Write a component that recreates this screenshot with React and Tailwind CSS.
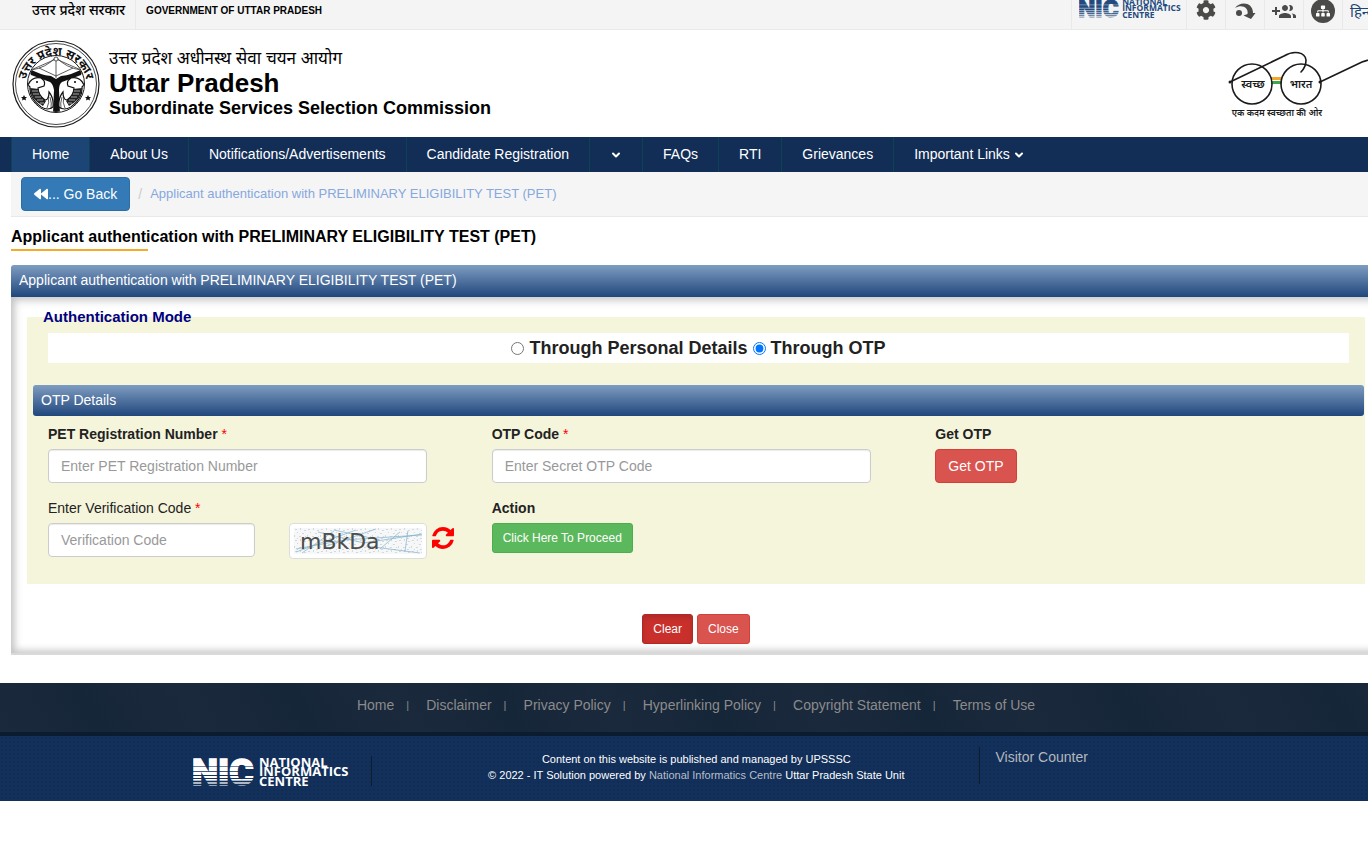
import React, { useState } from 'react';
import { FaBackward, FaCog, FaSitemap } from 'react-icons/fa';
import { ChevronDown } from 'lucide-react';

const NAV_ITEMS = [
  { label: 'Home', active: true },
  { label: 'About Us' },
  { label: 'Notifications/Advertisements' },
  { label: 'Candidate Registration' },
  { label: '', menu: true },
  { label: 'FAQs' },
  { label: 'RTI' },
  { label: 'Grievances' },
  { label: 'Important Links', menu: true },
];

const FOOTER_LINKS = [
  'Home',
  'Disclaimer',
  'Privacy Policy',
  'Hyperlinking Policy',
  'Copyright Statement',
  'Terms of Use',
];

const PAGE_TITLE = 'Applicant authentication with PRELIMINARY ELIGIBILITY TEST (PET)';

function NicLogo({ className, stripe }) {
  return (
    <svg viewBox="0 0 156 32" className={className} role="img" aria-label="National Informatics Centre">
      <text
        x="-1"
        y="29"
        fill="currentColor"
        stroke="currentColor"
        strokeWidth="1.5"
        fontFamily="Roboto, sans-serif"
        fontWeight="900"
        fontSize="37"
      >
        NIC
      </text>
      <g fill={stripe}>
        <rect x="0" y="10" width="64" height="1" opacity="0.6" />
        <rect x="0" y="15" width="64" height="1" opacity="0.8" />
        <rect x="0" y="19" width="64" height="1" />
        <rect x="0" y="22" width="64" height="1" />
        <rect x="0" y="25" width="64" height="1" />
        <rect x="0" y="28" width="64" height="1" />
        <rect x="0" y="24" width="64" height="7" opacity="0.35" />
      </g>
      <text fill="currentColor" fontFamily="'Open Sans', sans-serif" fontWeight="700" fontSize="13">
        <tspan x="66" y="11">NATIONAL</tspan>
        <tspan x="66" y="20">INFORMATICS</tspan>
        <tspan x="66" y="30">CENTRE</tspan>
      </text>
    </svg>
  );
}

function Fish() {
  return (
    <>
      <path d="M16 45 Q20 36 29 38 Q34 41 32 46 L26 48 Q26 55 33 60 Q37 60 37 52 Q42 58 41 67 Q36 71 29 67 Q17 58 18 47 Z" fill="#fff" stroke="#111" strokeWidth="1.2" />
      <path d="M18 48 L27 49 Q26 55 34 61 L31 66 Q18 59 18 48 Z" fill="#222" />
      <path d="M20 51h6M21 54h6M23 57h6M25 60h6M28 63h4" stroke="#fff" strokeWidth="0.6" />
      <path d="M35 68 Q38 62 36 57 M39 69 Q40 63 38 57" fill="none" stroke="#111" strokeWidth="0.7" />
      <circle cx="25" cy="42" r="1.1" fill="#111" />
    </>
  );
}

function StateEmblem() {
  return (
    <svg viewBox="0 0 88 88" className="h-[88px] w-[88px] shrink-0" role="img" aria-label="Uttar Pradesh emblem">
      <defs>
        <path id="emblem-arc" d="M13.5 52 A31 31 0 1 1 74.5 52" />
        <clipPath id="emblem-clip">
          <circle cx="44" cy="44" r="28" />
        </clipPath>
      </defs>
      <g fill="none" stroke="#1a1a1a">
        <circle cx="44" cy="44" r="43" strokeWidth="1.2" />
        <circle cx="44" cy="44" r="40.5" strokeWidth="0.8" />
        <circle cx="44" cy="44" r="28.5" strokeWidth="1" />
      </g>
      <text fontFamily="'Noto Sans', 'Noto Sans Devanagari', sans-serif" fontSize="12" fontWeight="700" fill="#111">
        <textPath href="#emblem-arc" startOffset="50%" textAnchor="middle">
          उत्तर प्रदेश सरकार
        </textPath>
      </text>
      <path d="M12 55l1 2h2l-1.5 1.500.5 2-2-1-2 1 .5-2L9 57h2zM76 55l1 2h2l-1.5 1.500.5 2-2-1-2 1 .5-2-1.5-1.5h2z" fill="#111" />
      <g clipPath="url(#emblem-clip)">
        {/* bow and arrow */}
        <path d="M19 30 Q34 28 44 17 Q54 28 69 30 M19 30 L44 19 L69 30 M44 17 V38 M27 28 L44 36 L61 28" fill="none" stroke="#333" strokeWidth="0.8" />
        <circle cx="44" cy="19" r="2" fill="#fff" stroke="#333" strokeWidth="0.8" />
        {/* confluence of the rivers */}
        <path d="M16 28 Q28 35 39 36 L44 39 L49 36 Q60 35 72 28 L69 35 Q58 39 50 42 Q47 44 47 50 L48 74 H41 L42 50 Q41 44 38 42 Q30 39 19 35 Z" fill="#111" />
        <Fish />
        <g transform="translate(88 0) scale(-1 1)">
          <Fish />
        </g>
      </g>
    </svg>
  );
}

function SwachhBharatLogo() {
  return (
    <svg viewBox="0 0 152 70" className="h-[70px] w-[152px] shrink-0" role="img" aria-label="Swachh Bharat">
      <rect x="43" y="27" width="11" height="3" fill="#f7a429" />
      <rect x="43" y="31" width="11" height="3" fill="#3fa64b" />
      <g fill="none" stroke="#1a1a1a" strokeWidth="1.6" strokeLinecap="round">
        <circle cx="24" cy="34" r="20" />
        <circle cx="73" cy="34" r="20" />
        <path d="M2 32 L56 6 C66 0 77 2 78 10 C78 15 76 19 73 22" />
        <path d="M92 32 L134 12 C139 10 144 9 150 8" />
      </g>
      <circle cx="2" cy="32" r="1.5" fill="#1a1a1a" />
      <circle cx="92" cy="32" r="1.5" fill="#1a1a1a" />
      <g fill="#1a1a1a" fontFamily="'Noto Sans', 'Noto Sans Devanagari', sans-serif" fontWeight="600" textAnchor="middle">
        <text x="25" y="38" fontSize="11">स्वच्छ</text>
        <text x="73" y="38" fontSize="11">भारत</text>
        <text x="49" y="66" fontSize="9">एक कदम स्वच्छता की ओर</text>
      </g>
    </svg>
  );
}

function SkipIcon() {
  return (
    <svg viewBox="0 0 24 24" className="h-6 w-6" fill="#4a4a48">
      <circle cx="6" cy="13" r="3" />
      <path d="M2 8 C7 1 20 2 20 13 H22.5 L18 19 L10.5 15.500 L14.5 14 C16 8 9 3.5 2 8 Z" />
    </svg>
  );
}

function GroupAddIcon() {
  return (
    <svg viewBox="0 0 24 24" className="h-6 w-6" fill="#4a4a48">
      <path d="M8 10H5V7H3v3H0v2h3v3h2v-3h3v-2zm10 1c1.66 0 2.99-1.34 2.99-3S19.66 5 18 5c-.32 0-.63.05-.91.14.57.81.9 1.79.9 2.86s-.34 2.04-.9 2.86c.28.09.59.14.91.14zm-5 0c1.66 0 2.99-1.34 2.99-3S14.66 5 13 5c-1.66 0-3 1.34-3 3s1.34 3 3 3zm6.62 2.16c.83.73 1.38 1.66 1.38 2.84v2h3v-2c0-1.54-2.37-2.49-4.38-2.84zM13 13c-2 0-6 1-6 3v2h12v-2c0-2-4-3-6-3z" />
    </svg>
  );
}

function Captcha() {
  return (
    <svg viewBox="0 0 128 26" className="block h-[26px] w-full" role="img" aria-label="Captcha">
      <defs>
        <pattern id="captcha-noise" width="13" height="11" patternUnits="userSpaceOnUse">
          <rect width="13" height="11" fill="#f5f7f8" />
          <path d="M1 1h2v1h-2zM6 0h1v2h-1zM10 2h2v1h-2zM3 4h1v1h-1zM8 5h2v1h-2zM0 7h1v2h-1zM5 8h2v1h-2zM11 8h1v1h-1zM3 10h1v1h-1zM9 10h2v1h-2z" fill="#d3d7da" />
        </pattern>
      </defs>
      <rect width="128" height="26" fill="url(#captcha-noise)" />
      <path
        d="M2 24 L62 2 M30 19 L82 1 M24 4 L70 15 L128 6 M40 2 L86 12 M2 21 L50 12 L128 7 M72 18 L126 25 M86 21 L106 4 M114 3 L111 24 M8 25 L40 3"
        fill="none"
        stroke="#7fb0ca"
        strokeWidth="1"
        opacity="0.7"
      />
      <text x="6" y="21" fontFamily="'DejaVu Sans', sans-serif" fontSize="22" fill="#4d4d4a">
        mBkDa
      </text>
    </svg>
  );
}

function RefreshIcon() {
  return (
    <svg viewBox="128 128 1536 1536" className="h-[22px] w-[22px]" fill="#f00">
      <path d="M1639 1056q0 5-1 7-64 268-268 434.5t-478 166.5q-146 0-282.5-55t-243.5-157l-129 129q-19 19-45 19t-45-19-19-45v-448q0-26 19-45t45-19h448q26 0 45 19t19 45-19 45l-137 137q71 66 161 102t187 36q134 0 250-65t186-179q11-17 53-117 8-23 30-23h192q13 0 22.5 9.5t9.5 22.5zm25-800v448q0 26-19 45t-45 19h-448q-26 0-45-19t-19-45 19-45l138-138q-148-137-349-137-134 0-250 65t-186 179q-11 17-53 117-8 23-30 23h-199q-13 0-22.5-9.5t-9.5-22.5v-7q65-268 270-434.5t480-166.5q146 0 284 55.5t245 156.5l130-129q19-19 45-19t45 19 19 45z" />
    </svg>
  );
}

const TOOL_CLASS = 'flex w-[39px] justify-center border-l border-[#e9e9e9]';

function TopBar() {
  return (
    <div className="flex h-[30px] justify-between overflow-hidden border-b border-[#e9e9e9] bg-[#f4f4f4]">
      <div className="flex items-start">
        <span className="flex h-full items-start border-r border-[#e9e9e9] pl-8 pr-[10px] text-[14px] leading-5 font-medium">
          उत्तर प्रदेश सरकार
        </span>
        <span className="pl-[10px] text-[10px] leading-[22px] font-bold">GOVERNMENT OF UTTAR PRADESH</span>
      </div>
      <div className="-mr-3 flex text-[#4a4a48]">
        <a href="#nic" className="flex w-[115px] items-start border-l border-[#e9e9e9] pl-[7px]">
          <NicLogo className="-mt-[2px] h-[21px] w-[102px] text-[#234a7d]" stripe="#f4f4f4" />
        </a>
        <button type="button" aria-label="Settings" className={TOOL_CLASS}>
          <FaCog className="h-5 w-5" />
        </button>
        <button type="button" aria-label="Skip to content" className={TOOL_CLASS}>
          <SkipIcon />
        </button>
        <button type="button" aria-label="Register" className={TOOL_CLASS}>
          <GroupAddIcon />
        </button>
        <button type="button" aria-label="Sitemap" className={TOOL_CLASS}>
          <span className="-mt-px flex h-6 w-6 items-center justify-center rounded-full bg-[#4a4a48]">
            <FaSitemap className="h-[14px] w-[14px] text-white" />
          </span>
        </button>
        <a href="#hindi" className="w-[38px] overflow-hidden border-l border-[#e9e9e9] pl-[7px] text-[15px] leading-6 whitespace-nowrap text-[#1c4475]">
          हिन्दी
        </a>
      </div>
    </div>
  );
}

function Header() {
  return (
    <header className="flex h-[107px] justify-between pl-3">
      <div className="flex pt-[10px]">
        <StateEmblem />
        <div className="pl-[9px] pt-[9px]">
          <p className="text-[17px] leading-5">उत्तर प्रदेश अधीनस्थ सेवा चयन आयोग</p>
          <h1 className="text-[26px] leading-7 font-bold">Uttar Pradesh</h1>
          <p className="text-[18px] leading-[22px] font-bold">Subordinate Services Selection Commission</p>
        </div>
      </div>
      <div className="-mr-3 pt-5">
        <SwachhBharatLogo />
      </div>
    </header>
  );
}

function NavBar() {
  return (
    <nav className="flex h-[35px] bg-[#122e57] pl-[11px] text-[14px] text-white">
      {NAV_ITEMS.map((item, i) => (
        <a
          key={i}
          href="#nav"
          aria-label={item.label || 'More'}
          className={`flex items-center gap-[3px] whitespace-nowrap border-[#0b4450] px-5 ${
            item.active ? 'border-l bg-[#1c4475]' : ''
          } ${i < NAV_ITEMS.length - 1 ? 'border-r' : ''}`}
        >
          {item.label}
          {item.menu && <ChevronDown className="h-3 w-3" strokeWidth={4} />}
        </a>
      ))}
    </nav>
  );
}

function SectionBar({ children, className }) {
  return (
    <h3 className={`bg-linear-to-b from-[#7f9dc1] to-[#20477c] px-2 text-[14px] leading-[30px] text-white ${className}`}>
      {children}
    </h3>
  );
}

const INPUT_CLASS =
  'h-[34px] rounded border border-[#ccc] bg-white px-3 text-[14px] text-[#555] shadow-[inset_0_1px_1px_rgba(0,0,0,0.08)] placeholder:text-[#999]';

const Required = () => <span className="font-normal text-[#f00]">*</span>;

function AuthForm() {
  const [mode, setMode] = useState('otp');

  return (
    <form className="border-b-2 border-[#d9d9d9] px-4 pb-[9px] pt-[10px] shadow-[inset_3px_3px_8px_#c4c4c4,inset_0_-3px_7px_#d0d0d0]">
      <fieldset className="bg-[#f5f5dc] pb-[25px] pl-[6px] pr-px">
        <legend className="pl-[10px] text-[15px] leading-5 font-bold text-[#000080]">Authentication Mode</legend>
        <div className="mx-[15px] mt-[6px] flex h-[30px] items-center justify-center gap-[5px] bg-white text-[18px] font-bold text-[#222]">
          <input id="mode-personal" type="radio" name="mode" className="h-[13px] w-[13px]" checked={mode === 'personal'} onChange={() => setMode('personal')} />
          <label htmlFor="mode-personal">Through Personal Details</label>
          <input id="mode-otp" type="radio" name="mode" className="h-[13px] w-[13px]" checked={mode === 'otp'} onChange={() => setMode('otp')} />
          <label htmlFor="mode-otp">Through OTP</label>
        </div>

        <SectionBar className="mt-[22px] rounded-[3px] pb-px">OTP Details</SectionBar>

        <div className="grid grid-cols-3 gap-y-[15px] pt-2 text-[14px] text-[#222]">
          <div className="px-[15px]">
            <label htmlFor="pet-number" className="block pb-[5px] leading-5 font-bold">
              PET Registration Number <Required />
            </label>
            <input id="pet-number" type="text" placeholder="Enter PET Registration Number" className={`w-11/12 ${INPUT_CLASS}`} />
          </div>
          <div className="px-[15px]">
            <label htmlFor="otp-code" className="block pb-[5px] leading-5 font-bold">
              OTP Code <Required />
            </label>
            <input id="otp-code" type="text" placeholder="Enter Secret OTP Code" className={`w-11/12 ${INPUT_CLASS}`} />
          </div>
          <div className="px-[15px]">
            <p className="pb-[5px] leading-5 font-bold">Get OTP</p>
            <button type="button" className="h-[34px] rounded border border-[#d43f3a] bg-[#d9534f] px-3 text-white">
              Get OTP
            </button>
          </div>
          <div className="px-[15px]">
            <label htmlFor="captcha-code" className="block pb-[5px] leading-5">
              Enter Verification Code <Required />
            </label>
            <div className="flex items-start">
              <input id="captcha-code" type="text" placeholder="Verification Code" className={`w-1/2 ${INPUT_CLASS}`} />
              <div className="ml-[8.333%] w-1/3 rounded border border-[#ddd] bg-white p-1">
                <Captcha />
              </div>
              <button type="button" aria-label="Refresh code" className="-mr-2 ml-[5px] mt-1">
                <RefreshIcon />
              </button>
            </div>
          </div>
          <div className="px-[15px]">
            <p className="pb-[5px] leading-5 font-bold">Action</p>
            <button type="button" className="h-[30px] rounded-[3px] border border-[#4cae4c] bg-[#5cb85c] px-[10px] text-[12px] text-white">
              Click Here To Proceed
            </button>
          </div>
        </div>
      </fieldset>

      <div className="flex justify-center gap-1 pt-[30px] text-[12px] text-white">
        <button type="reset" className="h-[30px] rounded-[3px] border border-[#ac2925] bg-[#c9302c] px-[10px] shadow-[inset_0_3px_5px_rgba(0,0,0,0.125)]">
          Clear
        </button>
        <button type="button" className="h-[30px] rounded-[3px] border border-[#d43f3a] bg-[#d9534f] px-[10px]">
          Close
        </button>
      </div>
    </form>
  );
}

function Footer() {
  return (
    <footer className="mt-7">
      <div className="border-b-4 border-[#0b1c30] bg-[#1a283b] bg-[repeating-linear-gradient(60deg,#1b293c_0px,#162639_90px,#1b293c_180px)]">
        <ul className="-mr-6 flex h-[49px] justify-center pt-3 text-[14px] leading-5 text-[#8b8b8b]">
          {FOOTER_LINKS.map((label, i) => (
            <li key={label} className="flex">
              <a href="#footer">{label}</a>
              {i < FOOTER_LINKS.length - 1 && <span className="w-8 pl-3 text-[11px]">|</span>}
            </li>
          ))}
        </ul>
      </div>
      <div className="flex h-[65px] bg-[#13305a] bg-[radial-gradient(#112c55_1px,transparent_1px)] bg-[size:4px_4px] text-white">
        <div className="flex w-[27.2%] shrink-0 justify-end pt-5">
          <div className="flex h-[30px] border-r border-[#0b1c30] pr-[22px]">
            <NicLogo className="h-8 w-[156px]" stripe="#13305a" />
          </div>
        </div>
        <div className="w-[44.4%] pl-[41px] pt-[15px] text-center text-[11px] leading-4">
          <p>Content on this website is published and managed by UPSSSC</p>
          <p>
            © 2022 - IT Solution powered by{' '}
            <a href="#nic" className="text-[#b9bfc9]">National Informatics Centre</a> Uttar Pradesh State Unit
          </p>
        </div>
        <div className="mt-[11px] h-[37px] border-l border-[#0b1c30] pl-[15px] text-[14px] leading-5 text-[#b4b8be]">
          Visitor Counter
        </div>
      </div>
    </footer>
  );
}

export default function App() {
  return (
    <div className="overflow-x-hidden bg-white font-['Liberation_Sans','Noto_Sans_Devanagari',sans-serif] text-black">
      <TopBar />
      <Header />
      <NavBar />
      <main className="-mr-[13px] ml-[11px]">
        <div className="flex h-[45px] items-start border-b border-[#e9e9e9] bg-[#f5f5f5] pl-[10px] pt-[5px] text-[14px]">
          <button type="button" className="flex h-[34px] items-center rounded border border-[#2e6da4] bg-[#337ab7] px-3 text-white">
            <FaBackward className="h-[14px] w-[14px]" />
            ... Go Back
          </button>
          <span className="px-2 leading-[34px] text-[#ccc]">/</span>
          <a href="#pet" className="text-[13px] leading-[34px] text-[#86a8de]">{PAGE_TITLE}</a>
        </div>
        <h2 className="pt-2 text-[16px] leading-6 font-bold">{PAGE_TITLE}</h2>
        <div className="h-[2px] w-[137px] bg-[#f5ab2a]" />
        <SectionBar className="mt-[14px] rounded-t-[3px] pb-[2px]">{PAGE_TITLE}</SectionBar>
        <AuthForm />
      </main>
      <Footer />
    </div>
  );
}
